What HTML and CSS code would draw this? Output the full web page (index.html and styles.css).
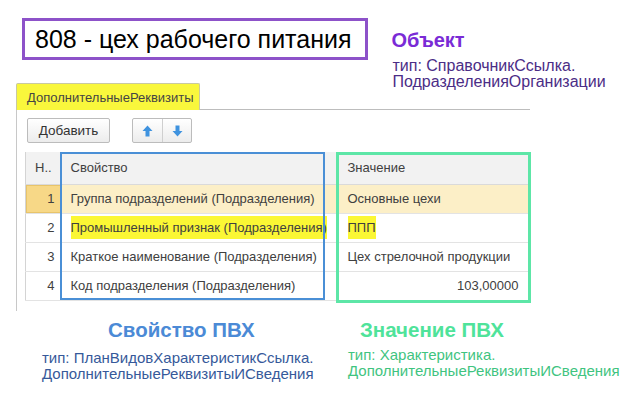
FILE: index.html
```html
<!DOCTYPE html>
<html lang="ru">
<head>
    <meta charset="UTF-8">
    <title>Дополнительные реквизиты</title>
    <link rel="stylesheet" href="styles.css">
</head>
<body>

    <!-- Объект -->
    <div class="top">
        <div class="object-name">808 - цех рабочего питания</div>
        <div class="object-info">
            <div class="object-title">Объект</div>
            <div class="object-type">тип: СправочникСсылка.<br>ПодразделенияОрганизации</div>
        </div>
    </div>

    <!-- Форма -->
    <div class="panel">
        <div class="tabs">
            <div class="tab">ДополнительныеРеквизиты</div>
            <div class="tab-line"></div>
        </div>
        <div class="panel-body">
            <div class="toolbar">
                <button class="btn">Добавить</button>
                <div class="btn-group">
                    <button class="btn-icon">
                        <svg width="11" height="12" viewBox="0 0 11 12"><path d="M5.5 0.5 L10.5 6 L7.5 6 L7.5 11.5 L3.5 11.5 L3.5 6 L0.5 6 Z" fill="#3f93df"/></svg>
                    </button>
                    <button class="btn-icon">
                        <svg width="11" height="12" viewBox="0 0 11 12"><path d="M5.5 11.5 L10.5 6 L7.5 6 L7.5 0.5 L3.5 0.5 L3.5 6 L0.5 6 Z" fill="#3f93df"/></svg>
                    </button>
                </div>
            </div>

            <div class="grid-wrap">
                <table class="grid">
                    <tr class="head">
                        <td class="num">Н..</td>
                        <td class="prop">Свойство</td>
                        <td class="val">Значение</td>
                    </tr>
                    <tr class="current">
                        <td class="num">1</td>
                        <td class="prop">Группа подразделений (Подразделения)</td>
                        <td class="val">Основные цехи</td>
                    </tr>
                    <tr>
                        <td class="num">2</td>
                        <td class="prop"><span class="mark">Промышленный признак (Подразделения)</span></td>
                        <td class="val"><span class="mark">ППП</span></td>
                    </tr>
                    <tr>
                        <td class="num">3</td>
                        <td class="prop">Краткое наименование (Подразделения)</td>
                        <td class="val">Цех стрелочной продукции</td>
                    </tr>
                    <tr>
                        <td class="num">4</td>
                        <td class="prop">Код подразделения (Подразделения)</td>
                        <td class="val right">103,00000</td>
                    </tr>
                </table>
                <div class="frame frame-prop"></div>
                <div class="frame frame-val"></div>
            </div>
        </div>
    </div>

    <!-- Подписи -->
    <div class="legend">
        <div class="legend-prop">
            <div class="legend-title">Свойство ПВХ</div>
            <div class="legend-type">тип: ПланВидовХарактеристикСсылка.<br>ДополнительныеРеквизитыИСведения</div>
        </div>
        <div class="legend-val">
            <div class="legend-title">Значение ПВХ</div>
            <div class="legend-type">тип: Характеристика.<br>ДополнительныеРеквизитыИСведения</div>
        </div>
    </div>

</body>
</html>
```

FILE: styles.css
```css
body {
    margin: 0;
    width: 642px;
    height: 395px;
    overflow: hidden;
    background: #fff;
    font-family: "Liberation Sans", Arial, sans-serif;
    color: #333;
}
.top {
    display: flex;
    align-items: flex-start;
    height: 83px;
}
.object-name {
    margin: 18px 0 0 22px;
    height: 36px;
    line-height: 36px;
    padding: 0 14px 0 10px;
    border: 3px solid #8d52c9;
    font-size: 25px;
    color: #000;
    white-space: nowrap;
}
.object-info {
    margin: 28px 0 0 23px;
}
.object-title {
    font-size: 20px;
    line-height: 24px;
    font-weight: bold;
    color: #7a2bd6;
}
.object-type {
    margin-top: 6px;
    margin-left: 1px;
    font-size: 16px;
    line-height: 16px;
    color: #4b2d86;
}

/* форма */
.panel {
    margin-left: 16px;
    width: 514px;
}
.tabs {
    display: flex;
    align-items: flex-end;
}
.tab {
    width: 172px;
    height: 26px;
    line-height: 28px;
    padding-left: 10px;
    background: #f9f73c;
    border: 1px solid #c9c9a0;
    border-bottom: none;
    border-radius: 2px 2px 0 0;
    font-size: 13px;
    color: #444;
}
.tab-line {
    flex: 1;
    border-bottom: 1px solid #bdbdbd;
}
.panel-body {
    border-left: 1px solid #c8c8c8;
    padding: 8px 0 10px 8px;
}
.toolbar {
    display: flex;
    gap: 22px;
    margin-left: 2px;
}
.btn {
    width: 83px;
    height: 25px;
    border: 1px solid #bcbcbc;
    border-radius: 2px;
    background: linear-gradient(#ffffff, #ececec);
    font-family: "Liberation Sans", Arial, sans-serif;
    font-size: 13.5px;
    color: #333;
    padding: 0;
}
.btn-group {
    display: flex;
    border: 1px solid #bcbcbc;
    border-radius: 2px;
    background: linear-gradient(#ffffff, #ececec);
    height: 23px;
}
.btn-icon {
    width: 29px;
    height: 23px;
    border: none;
    background: none;
    padding: 0;
    display: flex;
    align-items: center;
    justify-content: center;
}
.btn-icon + .btn-icon {
    border-left: 1px solid #cfcfcf;
}

/* таблица */
.grid-wrap {
    position: relative;
    margin-top: 9px;
    width: 506px;
}
.grid {
    border-collapse: collapse;
    table-layout: fixed;
    width: 503px;
    font-size: 13px;
    color: #404040;
    border-left: 1px solid #d4d4d4;
}
.grid td {
    box-sizing: border-box;
    height: 29px;
    padding: 0;
    border-bottom: 1px solid #e3e3e3;
    white-space: nowrap;
}
.grid .head td {
    height: 32px;
    background: #f2f2f2;
    border-bottom: 1px solid #dadada;
}
.grid .head .val {
    border-right: 1px solid #d4d4d4;
}
.num {
    width: 36px;
    text-align: right;
    padding-right: 7px !important;
}
.head .num {
    text-align: left;
    padding-left: 9px !important;
}
.prop {
    width: 276px;
    padding-left: 9px !important;
}
.val {
    width: 191px;
    padding-left: 10px !important;
}
.val.right {
    text-align: right;
    padding-right: 10px !important;
}
.current td {
    background: #fcefc7;
}
.current .num {
    background: #f7d887;
    box-shadow: inset 0 0 0 1px #e8c46a;
}
.mark {
    background: #fbf734;
    padding: 4px 0;
}
.frame {
    position: absolute;
    top: 0;
    box-sizing: border-box;
}
.frame-prop {
    left: 35px;
    width: 265px;
    height: 148px;
    border: 2px solid #4a8fd6;
}
.frame-val {
    left: 311px;
    width: 195px;
    height: 151px;
    border: 3px solid #5de6a7;
}

/* подписи */
.legend {
    display: flex;
    margin-top: 7px;
}
.legend-prop {
    width: 306px;
    padding-left: 42px;
}
.legend-prop .legend-title {
    padding-left: 66px;
    color: #4b8ad6;
}
.legend-val .legend-title {
    padding-left: 12px;
    color: #4fe39a;
}
.legend-title {
    font-size: 20.5px;
    line-height: 24px;
    font-weight: bold;
}
.legend-type {
    font-size: 15px;
    line-height: 16px;
    margin-top: 8px;
}
.legend-prop .legend-type {
    color: #36599a;
}
.legend-val .legend-type {
    color: #3fc47f;
    margin-top: 5px;
}
```
